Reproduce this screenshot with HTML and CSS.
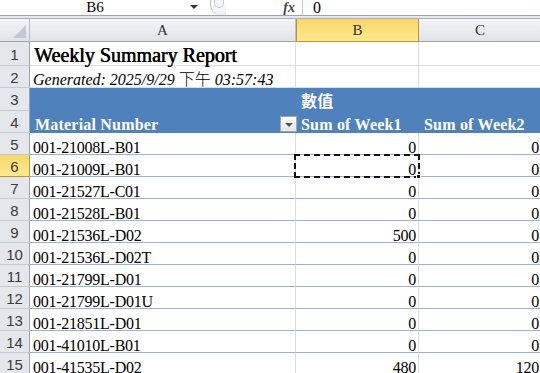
FILE: index.html
```html
<!DOCTYPE html>
<html lang="zh-Hant">
<head>
  <meta charset="UTF-8" />
  <title>Weekly Summary Report</title>
  <link rel="stylesheet" href="styles.css">
</head>
<body>
  <div class="formula-bar">
    <div class="name-box">
      <span class="name-text">B6</span>
      <span class="name-arrow"></span>
    </div>
    <div class="splitter"><span class="knob"></span></div>
    <div class="fx-area"><span class="fx">fx</span></div>
    <div class="formula-input">0</div>
  </div>
  <div class="bar-gap"></div>

  <div class="sheet">
    <div class="row col-heads">
      <div class="corner"><span class="corner-tri"></span></div>
      <div class="col-head">A</div>
      <div class="col-head active">B</div>
      <div class="col-head">C</div>
    </div>

    <div class="row r-title">
      <div class="row-head">1</div>
      <div class="cell title">Weekly Summary Report</div>
      <div class="cell"></div>
      <div class="cell"></div>
    </div>
    <div class="row r-gen">
      <div class="row-head">2</div>
      <div class="cell generated">Generated: 2025/9/29&nbsp;<span class="cjk">下午</span>&nbsp;03:57:43</div>
      <div class="cell"></div>
      <div class="cell"></div>
    </div>
    <div class="row r-pivot3">
      <div class="row-head">3</div>
      <div class="cell pivot"></div>
      <div class="cell pivot">數值</div>
      <div class="cell pivot"></div>
    </div>
    <div class="row r-pivot4">
      <div class="row-head">4</div>
      <div class="cell pivot">Material Number<span class="filter-btn"></span></div>
      <div class="cell pivot">Sum of Week1</div>
      <div class="cell pivot">Sum of Week2</div>
    </div>

    <div class="row data">
      <div class="row-head">5</div>
      <div class="cell">001-21008L-B01</div>
      <div class="cell num">0</div>
      <div class="cell num">0</div>
    </div>
    <div class="row data">
      <div class="row-head active">6</div>
      <div class="cell">001-21009L-B01</div>
      <div class="cell num selected">0<span class="fill-handle"></span></div>
      <div class="cell num">0</div>
    </div>
    <div class="row data">
      <div class="row-head">7</div>
      <div class="cell">001-21527L-C01</div>
      <div class="cell num">0</div>
      <div class="cell num">0</div>
    </div>
    <div class="row data">
      <div class="row-head">8</div>
      <div class="cell">001-21528L-B01</div>
      <div class="cell num">0</div>
      <div class="cell num">0</div>
    </div>
    <div class="row data">
      <div class="row-head">9</div>
      <div class="cell">001-21536L-D02</div>
      <div class="cell num">500</div>
      <div class="cell num">0</div>
    </div>
    <div class="row data">
      <div class="row-head">10</div>
      <div class="cell">001-21536L-D02T</div>
      <div class="cell num">0</div>
      <div class="cell num">0</div>
    </div>
    <div class="row data">
      <div class="row-head">11</div>
      <div class="cell">001-21799L-D01</div>
      <div class="cell num">0</div>
      <div class="cell num">0</div>
    </div>
    <div class="row data">
      <div class="row-head">12</div>
      <div class="cell">001-21799L-D01U</div>
      <div class="cell num">0</div>
      <div class="cell num">0</div>
    </div>
    <div class="row data">
      <div class="row-head">13</div>
      <div class="cell">001-21851L-D01</div>
      <div class="cell num">0</div>
      <div class="cell num">0</div>
    </div>
    <div class="row data">
      <div class="row-head">14</div>
      <div class="cell">001-41010L-B01</div>
      <div class="cell num">0</div>
      <div class="cell num">0</div>
    </div>
    <div class="row data">
      <div class="row-head">15</div>
      <div class="cell">001-41535L-D02</div>
      <div class="cell num">480</div>
      <div class="cell num">120</div>
    </div>
  </div>
</body>
</html>
```

FILE: styles.css
```css
* {
  box-sizing: border-box;
}
html, body {
  margin: 0;
  padding: 0;
  overflow: hidden;
  background: #fff;
}
body {
  width: 540px;
  height: 373px;
  font-family: "Liberation Serif", "Noto Sans CJK TC", serif;
  color: #000;
}

/* formula bar */
.formula-bar {
  display: flex;
  height: 16px;
  background: #fff;
  border-bottom: 1px solid #9da5b1;
  font-size: 15px;
  line-height: 15px;
}
.name-box {
  width: 210px;
  display: flex;
  align-items: flex-start;
}
.name-text {
  width: 190px;
  text-align: center;
}
.name-arrow {
  margin-top: 5px;
  width: 0;
  height: 0;
  border-left: 4px solid transparent;
  border-right: 4px solid transparent;
  border-top: 4px solid #333;
}
.splitter {
  width: 16px;
  background: linear-gradient(#fff, #eceef1);
  border-left: 1px solid #b9bec6;
  border-radius: 0 0 0 10px;
  display: flex;
  justify-content: center;
}
.knob {
  width: 10px;
  height: 8px;
  border-radius: 0 0 5px 5px;
  background: #f5f6f8;
  border: 1px solid #c7ccd3;
  border-top: none;
}
.fx-area {
  width: 77px;
  display: flex;
  justify-content: flex-end;
  padding-right: 7px;
  border-right: 1px solid #c3c8cf;
}
.fx {
  font-style: italic;
  font-weight: bold;
  font-size: 14px;
  color: #444;
}
.formula-input {
  flex: 1;
  padding-left: 10px;
  font-size: 16px;
}
.bar-gap {
  height: 3px;
  background: #e6e9ee;
  border-bottom: 1px solid #a7afbb;
}

/* sheet grid */
.row {
  display: grid;
  grid-template-columns: 30px 266px 123px 123px;
  height: 22px;
}
.col-heads {
  height: 23px;
}
.r-title {
  height: 24px;
}
.r-pivot3 {
  height: 23px;
}

.corner, .col-head {
  background: linear-gradient(#f2f4f7, #dfe3e8);
  border-right: 1px solid #b9c0ca;
  border-bottom: 1px solid #9aa3b0;
}
.corner {
  position: relative;
}
.corner-tri {
  position: absolute;
  right: 3px;
  bottom: 3px;
  width: 0;
  height: 0;
  border-left: 13px solid transparent;
  border-bottom: 13px solid #c3c9d1;
}
.col-head {
  display: flex;
  align-items: center;
  justify-content: center;
  font-size: 15px;
  color: #333;
}
.col-head.active {
  background: linear-gradient(#f9d76b, #ffe98d);
  border: 1px solid #c2922f;
  border-top: none;
}

.row-head {
  background: #e4e7ec;
  border-right: 1px solid #9aa3b0;
  border-bottom: 1px solid #c4cad3;
  display: flex;
  align-items: center;
  justify-content: center;
  padding-top: 1px;
  font-family: "Liberation Sans", sans-serif;
  font-size: 15px;
  color: #3b3b3b;
}
.row-head.active {
  background: linear-gradient(#f9d76b, #ffe98d);
  border-bottom-color: #c2922f;
  border-right-color: #c2922f;
}

.cell {
  display: flex;
  align-items: flex-end;
  padding: 0 2px 0 3px;
  font-size: 16px;
  letter-spacing: -0.25px;
  line-height: 12px;
  white-space: nowrap;
  border-right: 1px solid #dadcdd;
  border-bottom: 1px solid #dadcdd;
}
.title {
  font-size: 20px;
  line-height: 20px;
  letter-spacing: 0;
  text-shadow: 0.6px 0 0 #000;
  padding-left: 4px;
}
.generated {
  font-style: italic;
  font-size: 16px;
  line-height: 15px;
  letter-spacing: 0;
  padding-left: 3px;
  white-space: pre;
}
.cjk {
  font-weight: 300;
  font-style: normal;
}

.pivot {
  background: #4f81bd;
  border-color: #4f81bd;
  color: #fff;
  font-weight: bold;
  font-size: 16px;
  line-height: 15px;
  letter-spacing: 0.2px;
  padding-left: 5px;
}
.r-pivot3 .pivot {
  padding-bottom: 1px;
}
.filter-btn {
  margin-left: auto;
  margin-right: -4px;
  width: 17px;
  height: 16px;
  background: linear-gradient(#ffffff, #e3e5e8);
  border: 1px solid #a3a8b0;
  position: relative;
}
.filter-btn::after {
  content: "";
  position: absolute;
  left: 4px;
  top: 6px;
  border-left: 4px solid transparent;
  border-right: 4px solid transparent;
  border-top: 4px solid #555;
}

.data .cell {
  border-bottom: 1px solid #95b3d7;
}
.num {
  justify-content: flex-end;
}

.selected {
  position: relative;
}
.selected::after {
  content: "";
  position: absolute;
  left: -2px;
  top: -1px;
  right: -2px;
  bottom: -2px;
  border: 2px dashed #111;
}
.fill-handle {
  position: absolute;
  right: -3px;
  bottom: -3px;
  width: 5px;
  height: 5px;
  background: #111;
  border: 1px solid #fff;
  z-index: 1;
}
```
